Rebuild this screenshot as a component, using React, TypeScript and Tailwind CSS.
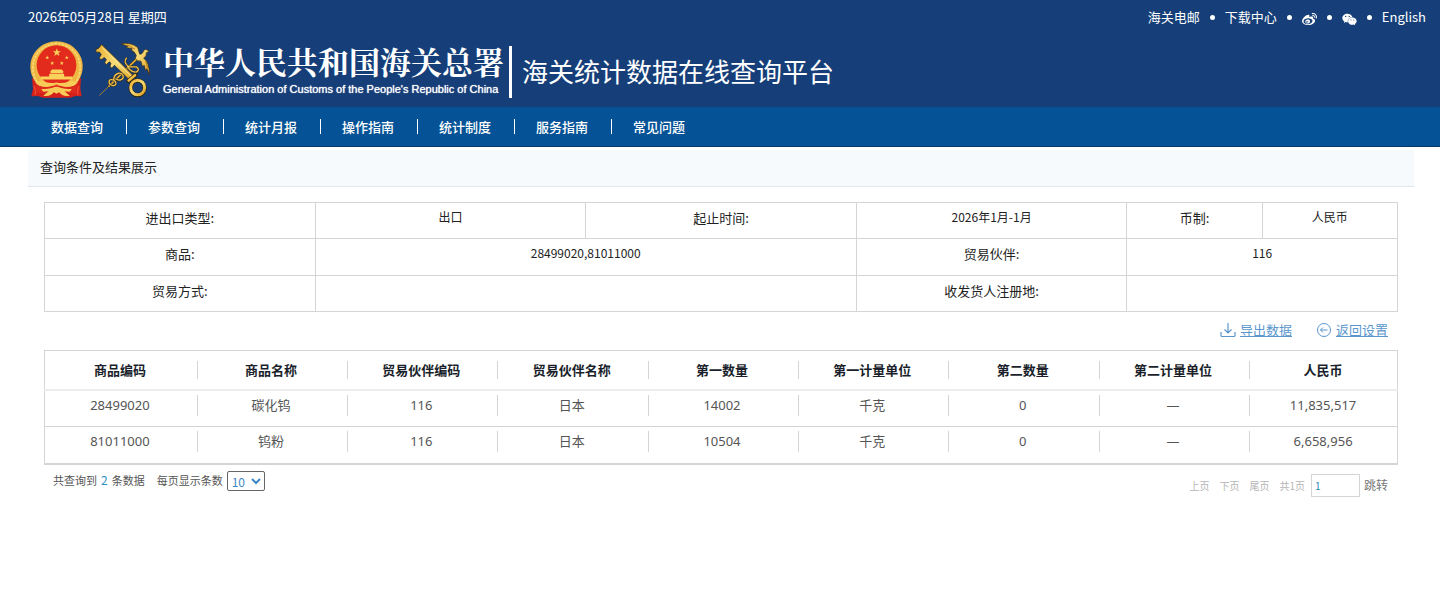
import React from 'react';
import { FaWeibo, FaWeixin } from 'react-icons/fa';

const NAV_ITEMS = ['数据查询', '参数查询', '统计月报', '操作指南', '统计制度', '服务指南', '常见问题'];

const COLUMNS = [
  '商品编码',
  '商品名称',
  '贸易伙伴编码',
  '贸易伙伴名称',
  '第一数量',
  '第一计量单位',
  '第二数量',
  '第二计量单位',
  '人民币',
];

const ROWS = [
  ['28499020', '碳化钨', '116', '日本', '14002', '千克', '0', '—', '11,835,517'],
  ['81011000', '钨粉', '116', '日本', '10504', '千克', '0', '—', '6,658,956'],
];

const STAR = '0,-10 2.4,-3.2 9.5,-3.1 3.8,1.2 5.9,8.1 0,4 -5.9,8.1 -3.8,1.2 -9.5,-3.1 -2.4,-3.2';

const NationalEmblem: React.FC = () => (
  <svg viewBox="28 15 160 172" className="h-[57px] w-[53px] shrink-0" role="img" aria-label="国徽">
    <path d="M34 126 L58 146 H158 L182 126 L180 158 L184 182 L164 181 L150 186 H66 L52 181 L32 182 L37 158 Z" fill="#d3201a" />
    <path d="M108 16 C152 16 187 50 187 93 C187 118 174 140 160 150 L108 160 L56 150 C42 140 29 118 29 93 C29 50 64 16 108 16 Z" fill="#efb742" />
    <path d="M50 140 C24 104 32 30 108 22 C184 30 192 104 166 140" fill="none" stroke="#f9d878" strokeWidth="5" strokeDasharray="8 3" />
    <ellipse cx="108" cy="88" rx="60" ry="60" fill="#e22b1d" />
    <g fill="#f9d25c">
      <polygon points={STAR} transform="translate(109 50) scale(1.3)" />
      <polygon points={STAR} transform="translate(80 65) scale(.65)" />
      <polygon points={STAR} transform="translate(139 65) scale(.65)" />
      <polygon points={STAR} transform="translate(95 82) scale(.65)" />
      <polygon points={STAR} transform="translate(124 82) scale(.65)" />
      <path d="M90 106 L94 101 H124 L128 106 V112 H90 Z" />
      <path d="M86 114 H131 V122 H156 V131 H60 V122 H86 Z" />
    </g>
    <path d="M62 134 Q84 146 108 140 Q132 146 154 134 L172 140 Q160 156 134 152 L108 146 L82 152 Q56 156 44 140 Z" fill="#f7cc58" />
    <path d="M44 142 Q62 160 86 153 L108 148 L130 153 Q154 160 172 142 L168 172 Q140 176 124 164 L108 168 L92 164 Q76 176 48 172 Z" fill="#df291d" />
    <path d="M62 160 Q84 160 96 156 Q108 150 120 156 Q132 160 154 160 L148 168 L132 167 L148 180 Q126 184 116 170 L108 174 L100 170 Q90 184 68 180 L84 167 L68 168 Z" fill="#f7cc58" />
    <path d="M40 150 Q46 164 44 178 M176 150 Q170 164 172 178" fill="none" stroke="#f04a35" strokeWidth="4" />
  </svg>
);

const CustomsEmblem: React.FC = () => (
  <svg viewBox="222 15 168 170" className="h-[57px] w-14 shrink-0" role="img" aria-label="海关关徽">
    <defs>
      <linearGradient id="gold" x1="0" y1="0" x2="1" y2="1">
        <stop offset="0" stopColor="#e8ac2c" />
        <stop offset=".5" stopColor="#f8dc78" />
        <stop offset="1" stopColor="#dc9c1c" />
      </linearGradient>
    </defs>
    <g fill="none" strokeLinecap="round" strokeLinejoin="round">
      <path d="M236 177 L264 150" stroke="#a47b30" strokeWidth="3" />
      <path d="M264 150 L356 60" stroke="#3a2c14" strokeWidth="8" />
      <path d="M264 150 L356 60" stroke="#e2ac38" strokeWidth="5" />
      <path
        d="M266 144 C258 128 278 126 284 138 C288 148 274 152 268 144 M278 130 C280 110 300 106 306 118 C310 130 294 136 284 128 M316 66 Q306 80 324 92 L346 92 Q358 100 346 108 Q330 108 320 92"
        stroke="#3a2c14"
        strokeWidth="7"
      />
      <path
        d="M266 144 C258 128 278 126 284 138 C288 148 274 152 268 144 M278 130 C280 110 300 106 306 118 C310 130 294 136 284 128 M316 66 Q306 80 324 92 L346 92 Q358 100 346 108 Q330 108 320 92"
        stroke="#edc153"
        strokeWidth="4"
      />
    </g>
    <path
      d="M300 23 Q328 17 350 34 L356 54 Q362 56 366 48 Q368 38 378 41 L384 46 L376 50 Q378 60 368 66 Q386 78 385 116 L378 98 L373 102 L370 88 L364 90 L360 75 Q348 76 343 67 L346 58 Q340 44 330 42 L334 38 L316 34 L320 30 Z"
      fill="url(#gold)"
      stroke="#3a2c14"
      strokeWidth="2"
    />
    <path d="M318 26 L342 39 M374 76 L381 96" stroke="#8a5f17" strokeWidth="2" />
    <path
      d="M233 36 L242 25 L342 123 L330 136 L280 87 L273 96 L267 91 L270 81 L265 77 L256 85 L251 80 L256 70 L250 64 L240 71 L235 65 L241 55 L236 48 L226 48 L224 41 Z"
      fill="url(#gold)"
      stroke="#2e2412"
      strokeWidth="2"
    />
    <path d="M244 35 L332 122" stroke="#fbe9a2" strokeWidth="3" />
    <path d="M322 134 L344 116" stroke="#2e2412" strokeWidth="12" strokeLinecap="round" />
    <path d="M323 133 L342 117" stroke="#f0bd44" strokeWidth="8" strokeLinecap="round" />
    <ellipse cx="350" cy="155" rx="21" ry="22" fill="none" stroke="#2e2412" strokeWidth="13" />
    <ellipse cx="350" cy="154" rx="21" ry="22" fill="none" stroke="url(#gold)" strokeWidth="9" />
  </svg>
);

const Dot: React.FC = () => <span className="size-[5px] rounded-full bg-white" />;

const DownloadIcon: React.FC = () => (
  <svg viewBox="0 0 16 16" className="size-4" fill="none" stroke="currentColor" strokeWidth="1.2">
    <path d="M8 1v10M4.5 7.5 8 11l3.5-3.5M1 10v3.5q0 1 1 1h12q1 0 1-1V10" />
  </svg>
);

const BackIcon: React.FC = () => (
  <svg viewBox="0 0 16 16" className="size-4" fill="none" stroke="currentColor" strokeWidth="1">
    <circle cx="8" cy="8" r="6.5" />
    <path d="M11.5 8H4.5M7 5.5 4.5 8 7 10.5" />
  </svg>
);

const Header: React.FC = () => (
  <header className="bg-[#163f79] text-white">
    <div className="flex h-[34px] items-center justify-between pr-3.5 pl-7 text-[13px]">
      <span>2026年05月28日 星期四</span>
      <div className="flex items-center gap-2.5">
        <a href="#mail">海关电邮</a>
        <Dot />
        <a href="#download">下载中心</a>
        <Dot />
        <a href="#weibo" aria-label="微博" className="pt-1"><FaWeibo className="size-[15px]" /></a>
        <Dot />
        <a href="#wechat" aria-label="微信" className="pt-1"><FaWeixin className="size-[15px]" /></a>
        <Dot />
        <a href="#english">English</a>
      </div>
    </div>
    <div className="flex items-center pt-[7px] pb-[9px] pl-[30px]">
      <NationalEmblem />
      <div className="ml-3">
        <CustomsEmblem />
      </div>
      <div className="ml-3">
        <h1 className="font-['Noto_Serif_CJK_SC','Source_Han_Serif_SC','Noto_Sans_CJK_SC',serif] text-[31px] leading-9 font-bold whitespace-nowrap">
          中华人民共和国海关总署
        </h1>
        <p className="pt-0.5 font-['Liberation_Sans',sans-serif] text-[11px] leading-4 whitespace-nowrap [text-shadow:0_0_1px_white]">
          General Administration of Customs of the People's Republic of China
        </p>
      </div>
      <span className="ml-[5px] h-[52px] w-[3px] self-end bg-white" />
      <h2 className="ml-2.5 pt-0.5 text-[26px] leading-10 whitespace-nowrap">海关统计数据在线查询平台</h2>
    </div>
  </header>
);

const NavBar: React.FC = () => (
  <nav className="flex h-10 items-center border-b border-[#0b3768] bg-[#055396] pl-[30px] text-[13px] font-medium text-white">
    {NAV_ITEMS.map((item, index) => (
      <React.Fragment key={item}>
        {index > 0 && <span className="h-[15px] w-px bg-white" />}
        <a href={`#nav-${index}`} className="pr-[23px] pl-[21px]">{item}</a>
      </React.Fragment>
    ))}
  </nav>
);

interface CellProps {
  children?: React.ReactNode;
  span?: number;
}

const LabelCell: React.FC<CellProps> = ({ children }) => (
  <th scope="row" className="border border-[#d5d5d5] pt-[5px] align-top text-[13px] leading-5 font-normal">
    {children}
  </th>
);

const ValueCell: React.FC<CellProps> = ({ children, span = 1 }) => (
  <td colSpan={span} className="border border-[#d5d5d5] pt-1 align-top text-xs leading-5">
    {children}
  </td>
);

const QueryTable: React.FC = () => (
  <table className="w-full table-fixed border-collapse text-center text-[#222]">
    <colgroup>
      <col className="w-1/5" />
      <col className="w-1/5" />
      <col className="w-1/5" />
      <col className="w-1/5" />
      <col className="w-1/10" />
      <col className="w-1/10" />
    </colgroup>
    <tbody>
      <tr className="h-9">
        <LabelCell>进出口类型:</LabelCell>
        <ValueCell>出口</ValueCell>
        <LabelCell>起止时间:</LabelCell>
        <ValueCell>2026年1月-1月</ValueCell>
        <LabelCell>币制:</LabelCell>
        <ValueCell>人民币</ValueCell>
      </tr>
      <tr className="h-[37px]">
        <LabelCell>商品:</LabelCell>
        <ValueCell span={2}>28499020,81011000</ValueCell>
        <LabelCell>贸易伙伴:</LabelCell>
        <ValueCell span={2}>116</ValueCell>
      </tr>
      <tr className="h-9">
        <LabelCell>贸易方式:</LabelCell>
        <ValueCell span={2} />
        <LabelCell>收发货人注册地:</LabelCell>
        <ValueCell span={2} />
      </tr>
    </tbody>
  </table>
);

const ResultTable: React.FC = () => (
  <table className="w-full table-fixed border-collapse border border-b-2 border-[#d5d5d5] text-center text-[13px]">
    <thead>
      <tr className="h-[39px] border-b-2 border-[#ececec] text-[#1a1f2b]">
        {COLUMNS.map((column, index) => (
          <th key={column} scope="col" className="p-0 font-bold">
            <div className={index > 0 ? 'mr-px ml-0.5 border-l border-[#d5d5d5] leading-[18px]' : 'leading-[18px]'}>
              {column}
            </div>
          </th>
        ))}
      </tr>
    </thead>
    <tbody className="font-['Noto_Sans','Noto_Sans_CJK_SC',sans-serif] text-[#555]">
      {ROWS.map((row) => (
        <tr key={row[0]} className="h-[37px] border-t border-[#d5d5d5]">
          {row.map((cell, index) => (
            <td key={COLUMNS[index]} className="p-0 pt-1 align-top">
              <div className={index > 0 ? 'mr-px ml-0.5 h-[21px] border-l border-[#d5d5d5] leading-[21px]' : 'h-[21px] leading-[21px]'}>
                {cell}
              </div>
            </td>
          ))}
        </tr>
      ))}
    </tbody>
  </table>
);

const Pagination: React.FC = () => (
  <div className="flex items-start justify-between pt-1.5 pr-2.5 pl-[9px] text-[11px] text-[#555]">
    <div className="flex items-center">
      <span>
        共查询到<span className="mx-1 text-xs text-[#2b8fc4]">2</span>条数据
      </span>
      <label htmlFor="page-size" className="ml-3">每页显示条数</label>
      <select
        id="page-size"
        defaultValue="10"
        className="ml-1 h-5 w-[38px] rounded-xs border border-[#666] bg-white text-xs leading-4 text-[#3f86c6]"
      >
        <option>10</option>
        <option>20</option>
        <option>50</option>
      </select>
    </div>
    <div className="flex items-center pt-[3px] text-[10px] text-[#b5b5b5]">
      <div className="flex gap-2.5">
        <button type="button">上页</button>
        <button type="button">下页</button>
        <button type="button">尾页</button>
        <span>共1页</span>
      </div>
      <input
        type="text"
        aria-label="页码"
        defaultValue="1"
        className="ml-1.5 h-[23px] w-[49px] border border-[#d5d5d5] px-[3px] text-[#1f86b8]"
      />
      <button type="button" className="ml-1 text-xs text-[#777]">跳转</button>
    </div>
  </div>
);

const App: React.FC = () => {
  return (
    <div className="min-h-screen bg-white font-['Noto_Sans_CJK_SC',sans-serif]">
      <Header />
      <NavBar />
      <main>
        <h3 className="mt-[3px] mr-[26px] ml-7 border-b border-[#dfe5ea] bg-[#f6fafd] px-3 pt-[7px] pb-[9px] text-[13px] leading-5 text-[#222]">
          查询条件及结果展示
        </h3>
        <section className="mt-[15px] mr-[42px] ml-11">
          <QueryTable />
          <div className="flex h-[38px] items-center justify-end gap-6 pr-2.5 pb-0.5 text-[13px] text-[#5b97cd]">
            <a href="#export" className="flex items-center gap-1 underline">
              <DownloadIcon />
              导出数据
            </a>
            <a href="#settings" className="flex items-center gap-1 underline">
              <BackIcon />
              返回设置
            </a>
          </div>
          <ResultTable />
          <Pagination />
        </section>
      </main>
    </div>
  );
};

export default App;
